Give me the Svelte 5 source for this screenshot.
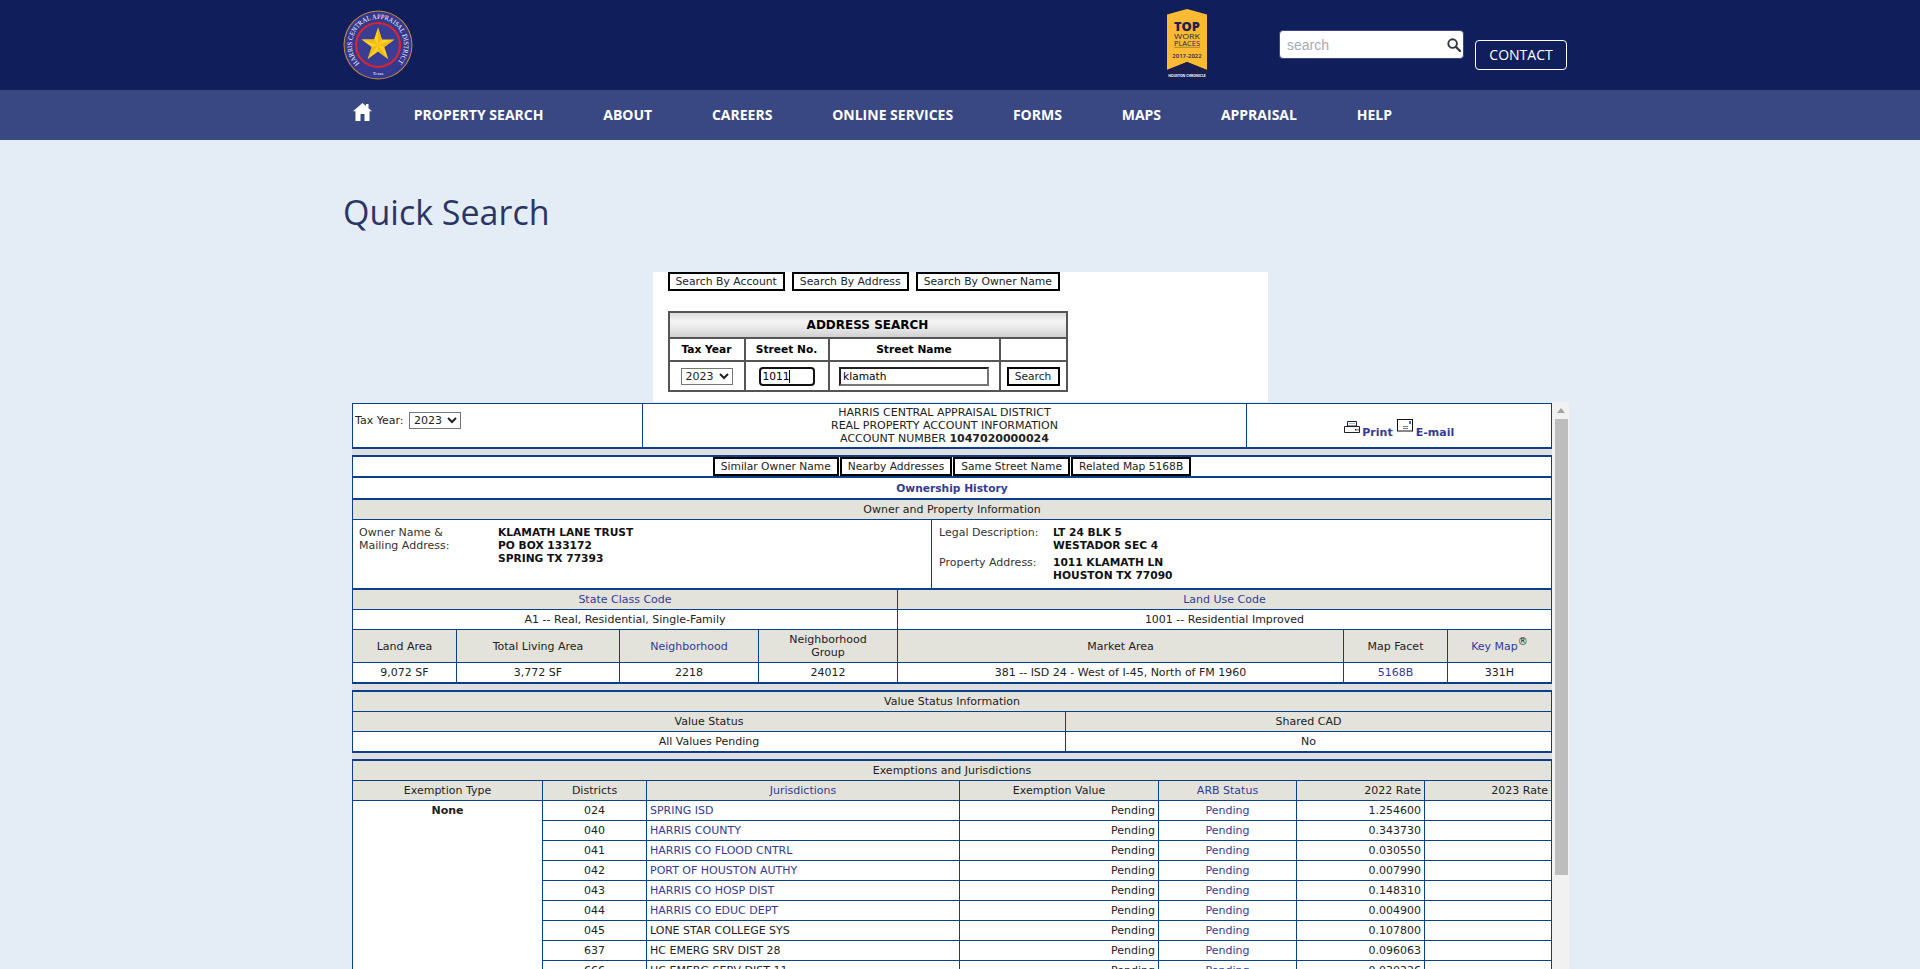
<script>
  const nav = ['Property Search', 'About', 'Careers', 'Online Services', 'Forms', 'Maps', 'Appraisal', 'Help'];
  const relatedLinks = ['Similar Owner Name', 'Nearby Addresses', 'Same Street Name', 'Related Map 5168B'];
  const searchTabs = ['Search By Account', 'Search By Address', 'Search By Owner Name'];

  const districts = [
    { id: '024', name: 'SPRING ISD', link: true, rate: '1.254600' },
    { id: '040', name: 'HARRIS COUNTY', link: true, rate: '0.343730' },
    { id: '041', name: 'HARRIS CO FLOOD CNTRL', link: true, rate: '0.030550' },
    { id: '042', name: 'PORT OF HOUSTON AUTHY', link: true, rate: '0.007990' },
    { id: '043', name: 'HARRIS CO HOSP DIST', link: true, rate: '0.148310' },
    { id: '044', name: 'HARRIS CO EDUC DEPT', link: true, rate: '0.004900' },
    { id: '045', name: 'LONE STAR COLLEGE SYS', link: false, rate: '0.107800' },
    { id: '637', name: 'HC EMERG SRV DIST 28', link: false, rate: '0.096063' },
    { id: '666', name: 'HC EMERG SERV DIST 11', link: false, rate: '0.030226' }
  ];
</script>

<div class="page">
  <header class="top">
    <div class="wrap top-row">
      <svg class="logo" viewBox="0 0 70 70" role="img" aria-label="Harris Central Appraisal District">
        <defs>
          <path id="ring" d="M16.600 53.400 A26 26 0 1 1 53.400 53.400" />
        </defs>
        <circle cx="35" cy="35" r="34.500" fill="#c98a3c" />
        <circle cx="35" cy="35" r="33.500" fill="#34388f" />
        <circle cx="35" cy="35" r="22" fill="#3a3d94" stroke="#d8262f" stroke-width="2.200" />
        <text class="ring-text"><textPath href="#ring" textLength="120" lengthAdjust="spacingAndGlyphs">HARRIS CENTRAL APPRAISAL DISTRICT</textPath></text>
        <text class="ring-state" x="35" y="65" text-anchor="middle">Texas</text>
        <polygon fill="#ffd21f" points="35,17.500 38.900,29.500 51.500,29.500 41.300,36.900 45.200,48.900 35,41.500 24.800,48.900 28.700,36.900 18.500,29.500 31.100,29.500" />
        <polygon fill="#f2b91c" points="35,17.500 38.900,29.500 35,35" />
        <polygon fill="#f2b91c" points="51.500,29.500 41.300,36.900 35,35" />
        <polygon fill="#f2b91c" points="45.200,48.900 35,41.500 35,35" />
        <polygon fill="#f2b91c" points="24.800,48.900 28.700,36.900 35,35" />
        <polygon fill="#f2b91c" points="18.500,29.500 31.100,29.500 35,35" />
      </svg>

      <svg class="badge" viewBox="0 0 40 71" role="img" aria-label="Top Workplaces 2017-2022">
        <polygon fill="#fbb934" points="0,5.500 20,0 40,5.500 40,61 20,53 0,61" />
        <polygon fill="#1a1d4e" points="0,61 20,53 40,61 40,71 0,71" />
        <text class="b-top" x="7" y="22" textLength="26" lengthAdjust="spacingAndGlyphs">TOP</text>
        <text class="b-mid" x="7" y="29.500" textLength="26" lengthAdjust="spacingAndGlyphs">WORK</text>
        <text class="b-mid" x="7" y="36.500" textLength="26" lengthAdjust="spacingAndGlyphs">PLACES</text>
        <rect x="7" y="37.800" width="26" height="0.800" fill="#8a7a45" />
        <text class="b-years" x="20" y="49" text-anchor="middle">2017-2022</text>
        <text class="b-foot" x="20" y="68" text-anchor="middle">HOUSTON CHRONICLE</text>
      </svg>

      <div class="site-search">
        <input type="text" placeholder="search" />
        <svg viewBox="0 0 14 14" aria-hidden="true">
          <circle cx="5.600" cy="5.600" r="4.300" fill="none" stroke="#33363f" stroke-width="1.900" />
          <path d="M8.800 8.800 L13 13" stroke="#33363f" stroke-width="2.200" stroke-linecap="round" />
        </svg>
      </div>
      <button class="contact">CONTACT</button>
    </div>
  </header>

  <nav class="menu">
    <div class="wrap menu-row">
      <svg class="home" viewBox="0 0 19 18" aria-label="Home">
        <path fill="#fff" d="M9.500 0 L13 3 V1 H15.500 V5.200 L19 8.300 H16.500 V18 H11.500 V11 H7.500 V18 H2.500 V8.300 H0 Z" />
      </svg>
      {#each nav as item}
        <span class="menu-item">{item}</span>
      {/each}
    </div>
  </nav>

  <main class="wrap content">
    <h1>Quick Search</h1>

    <section class="search-panel">
      <div class="tabs">
        {#each searchTabs as tab}
          <button class="tab panel-tab">{tab}</button>
        {/each}
      </div>
      <table class="address">
        <colgroup>
          <col class="a1" /><col class="a2" /><col class="a3" /><col />
        </colgroup>
        <thead>
          <tr><th colspan="4" class="address-title">ADDRESS SEARCH</th></tr>
          <tr><th>Tax Year</th><th>Street No.</th><th>Street Name</th><th></th></tr>
        </thead>
        <tbody>
          <tr>
            <td><select class="year"><option>2023</option></select></td>
            <td>
              <span class="caret-box">
                <input class="street-no" value="1011" />
                <i class="caret"></i>
              </span>
            </td>
            <td><input class="street-name" value="klamath" /></td>
            <td><button class="go">Search</button></td>
          </tr>
        </tbody>
      </table>
    </section>

    <div class="frame">
      <div class="report">
        <table class="grid head-table">
          <colgroup><col class="h1" /><col class="h2" /><col /></colgroup>
          <tbody>
            <tr>
              <td class="left tax-cell">Tax Year: <select class="year tax-year"><option>2023</option></select></td>
              <td class="head-mid">
                HARRIS CENTRAL APPRAISAL DISTRICT<br />
                REAL PROPERTY ACCOUNT INFORMATION<br />
                ACCOUNT NUMBER <b>1047020000024</b>
              </td>
              <td class="tools">
                <svg class="print-ico" viewBox="0 0 16 12" aria-hidden="true">
                  <path d="M3.500 .5 H12.500 V5 H3.500 Z" fill="#fff" stroke="#222" />
                  <rect x="5" y="2" width="6" height="1" fill="#8fd0f0" />
                  <path d="M.5 5.500 H15.500 V11.500 H.5 Z" fill="#fff" stroke="#222" />
                  <rect x="11" y="8" width="1.500" height="1.500" fill="#222" />
                  <rect x="13.500" y="8" width="1" height="1.500" fill="#222" />
                </svg>
                <a href="#print">Print</a>
                <svg class="mail-ico" viewBox="0 0 16 13" aria-hidden="true">
                  <rect x=".5" y=".5" width="15" height="11.500" fill="#fff" stroke="#111" />
                  <rect x="12" y="2" width="2" height="3" fill="#5566a8" />
                  <path d="M6 7 h5 v1 h-5 z M6 9 h5 v1 h-5 z" fill="#777" />
                </svg>
                <a href="#mail">E-mail</a>
              </td>
            </tr>
          </tbody>
        </table>

        <div class="gap"></div>

        <div class="band related">
          {#each relatedLinks as link}
            <button class="tab">{link}</button>
          {/each}
        </div>
        <div class="band history"><a href="#history">Ownership History</a></div>
        <div class="band beige-band">Owner and Property Information</div>

        <div class="owner">
          <div class="owner-left">
            <span>Owner Name &amp;<br />Mailing Address:</span>
            <b>KLAMATH LANE TRUST<br />PO BOX 133172<br />SPRING TX 77393</b>
          </div>
          <div class="owner-right">
            <span>Legal Description:</span>
            <b>LT 24 BLK 5<br />WESTADOR SEC 4</b>
            <span>Property Address:</span>
            <b>1011 KLAMATH LN<br />HOUSTON TX 77090</b>
          </div>
        </div>

        <table class="grid">
          <colgroup><col class="s1" /><col /></colgroup>
          <tbody>
            <tr class="beige">
              <td><a href="#state">State Class Code</a></td>
              <td><a href="#land">Land Use Code</a></td>
            </tr>
            <tr>
              <td>A1 -- Real, Residential, Single-Family</td>
              <td>1001 -- Residential Improved</td>
            </tr>
          </tbody>
        </table>

        <table class="grid closed">
          <colgroup>
            <col class="l1" /><col class="l2" /><col class="l3" /><col class="l4" />
            <col class="l5" /><col class="l6" /><col />
          </colgroup>
          <tbody>
            <tr class="beige tall">
              <td>Land Area</td>
              <td>Total Living Area</td>
              <td><a href="#hood">Neighborhood</a></td>
              <td>Neighborhood<br />Group</td>
              <td>Market Area</td>
              <td>Map Facet</td>
              <td><a href="#key">Key Map</a><sup>®</sup></td>
            </tr>
            <tr>
              <td>9,072 SF</td>
              <td>3,772 SF</td>
              <td>2218</td>
              <td>24012</td>
              <td>381 -- ISD 24 - West of I-45, North of FM 1960</td>
              <td><a href="#facet">5168B</a></td>
              <td>331H</td>
            </tr>
          </tbody>
        </table>

        <div class="gap"></div>

        <div class="band open-band beige-band">Value Status Information</div>
        <table class="grid closed">
          <colgroup><col class="v1" /><col /></colgroup>
          <tbody>
            <tr class="beige"><td>Value Status</td><td>Shared CAD</td></tr>
            <tr><td>All Values Pending</td><td>No</td></tr>
          </tbody>
        </table>

        <div class="gap"></div>

        <div class="band open-band beige-band">Exemptions and Jurisdictions</div>
        <table class="grid">
          <colgroup>
            <col class="e1" /><col class="e2" /><col class="e3" /><col class="e4" />
            <col class="e5" /><col class="e6" /><col />
          </colgroup>
          <tbody>
            <tr class="beige">
              <td>Exemption Type</td>
              <td>Districts</td>
              <td><a href="#jur">Jurisdictions</a></td>
              <td>Exemption Value</td>
              <td><a href="#arb">ARB Status</a></td>
              <td class="right">2022 Rate</td>
              <td class="right">2023 Rate</td>
            </tr>
            {#each districts as d, i}
              <tr>
                {#if i === 0}
                  <td class="none" rowspan={districts.length}><b>None</b></td>
                {/if}
                <td>{d.id}</td>
                <td class="left">
                  {#if d.link}<a href="#d">{d.name}</a>{:else}{d.name}{/if}
                </td>
                <td class="right">Pending</td>
                <td><a href="#p">Pending</a></td>
                <td class="right">{d.rate}</td>
                <td></td>
              </tr>
            {/each}
          </tbody>
        </table>
      </div>

      <div class="scrollbar">
        <div class="arrow"></div>
        <div class="thumb"></div>
      </div>
    </div>
  </main>
</div>

<style>
  :global(body) {
    background: #e4ecf6;
    overflow: hidden;
  }
  .page {
    height: 100vh;
    display: flex;
    flex-direction: column;
    overflow: hidden;
  }
  .wrap {
    width: 1234px;
    margin: 0 auto;
    box-sizing: border-box;
  }
  .top {
    background: #101f5c;
    height: 90px;
    flex: none;
  }
  .top-row {
    display: flex;
    align-items: flex-start;
    height: 90px;
    padding-right: 10px;
  }
  .logo {
    width: 70px;
    height: 70px;
    margin-top: 10px;
  }
  .ring-text {
    font: 7px "Liberation Serif", serif;
    fill: #fff;
  }
  .ring-state {
    font: 4.500px "Liberation Serif", serif;
    fill: #fff;
  }
  .badge {
    width: 40px;
    height: 71px;
    margin: 9px 0 0 754px;
  }
  .b-top {
    font: 800 12px "Open Sans", sans-serif;
    fill: #1c2350;
  }
  .b-mid {
    font: 7px "Open Sans", sans-serif;
    fill: #1c2350;
  }
  .b-years {
    font: 600 6px "Open Sans", sans-serif;
    fill: #1c2350;
  }
  .b-foot {
    font: 700 3.400px "Open Sans", sans-serif;
    fill: #fff;
  }
  .site-search {
    width: 185px;
    height: 29px;
    margin: 30px 0 0 72px;
    box-sizing: border-box;
    background: #fff;
    border: 1px solid #394882;
    border-radius: 4px;
    display: flex;
    align-items: center;
    padding: 0 2px 0 7px;
  }
  .site-search input {
    flex: 1;
    min-width: 0;
    border: 0;
    outline: 0;
    padding: 0;
    background: none;
    font: 14px "Liberation Sans", sans-serif;
  }
  .site-search input::placeholder {
    color: #a4abb9;
    opacity: 1;
  }
  .site-search svg {
    width: 14px;
    height: 14px;
  }
  .contact {
    width: 92px;
    height: 30px;
    margin: 40px 0 0 11px;
    border: 1px solid #fff;
    border-radius: 4px;
    background: none;
    color: #fff;
    padding: 0 0 2px;
    font: 14px "Open Sans", sans-serif;
  }
  .menu {
    background: #394882;
    height: 50px;
    flex: none;
  }
  .menu-row {
    display: flex;
    align-items: center;
    height: 50px;
    padding: 0 0 2px 10px;
    gap: 59.800px;
  }
  .home {
    width: 19px;
    height: 18px;
    margin: -4px -18px 0 0;
    flex: none;
  }
  .menu-item {
    font: 700 14px "Open Sans", sans-serif;
    color: #fff;
    text-transform: uppercase;
    white-space: nowrap;
  }
  .content {
    flex: 1;
    min-height: 0;
    display: flex;
    flex-direction: column;
  }
  h1 {
    margin: 0;
    padding-top: 48px;
    height: 84px;
    font: 400 34px/49px "Open Sans", sans-serif;
    color: #2a3566;
    flex: none;
  }
  .search-panel {
    width: 615px;
    height: 130px;
    margin: 0 auto;
    flex: none;
    box-sizing: border-box;
    background: #fff;
    padding-left: 15px;
    font: 11px "DejaVu Sans", sans-serif;
    color: #000;
  }
  .tabs {
    display: flex;
    gap: 7px;
    margin-bottom: 20px;
  }
  .tab {
    font: 10.670px/13px "DejaVu Sans", sans-serif;
    color: #222;
    background: #fff;
    border: 2px solid #000;
    height: 19px;
    padding: 0 6px;
    white-space: nowrap;
    border-radius: 0;
  }
  .panel-tab {
    font-size: 10.800px;
  }
  .address {
    width: 400px;
    table-layout: fixed;
    border-collapse: collapse;
    text-align: center;
  }
  .address th, .address td {
    border: 2px solid #555;
    padding: 0;
  }
  .address th {
    height: 21px;
    font-weight: 700;
    font-size: 10.670px;
  }
  .address .address-title {
    height: 24px;
    background: linear-gradient(#dcdcdc, #f4f4f4 35%, #e4e4e4 70%, #d0d0d0);
    font-size: 12px;
  }
  .address td {
    height: 28px;
  }
  .a1 { width: 76px; }
  .a2 { width: 84px; }
  .a3 { width: 171px; }
  .year {
    height: 17px;
    width: 52px;
    padding: 0;
    font: 11px "DejaVu Sans", sans-serif;
    color: #222;
    background: #fff;
    border: 1px solid #767676;
    border-radius: 0;
  }
  .tax-year {
    margin-left: 2px;
  }
  .caret-box {
    position: relative;
    display: inline-block;
    vertical-align: middle;
  }
  .street-no {
    width: 56px;
    height: 19px;
    box-sizing: border-box;
    border: 2px solid #111;
    border-radius: 4px;
    padding: 0 2px;
    font: 10.670px "DejaVu Sans", sans-serif;
    display: block;
  }
  .caret {
    position: absolute;
    left: 30px;
    top: 3px;
    width: 1px;
    height: 13px;
    background: #000;
  }
  .street-name {
    width: 150px;
    height: 19px;
    box-sizing: border-box;
    border: 2px inset #767676;
    padding: 0 2px;
    font: 10.670px "DejaVu Sans", sans-serif;
    vertical-align: middle;
  }
  .go {
    width: 53px;
    height: 19px;
    box-sizing: border-box;
    background: #fff;
    border: 2px solid #000;
    padding: 0;
    color: #222;
    font: 10.670px "DejaVu Sans", sans-serif;
    vertical-align: middle;
  }
  .frame {
    flex: 1;
    min-height: 0;
    margin-left: 9px;
    width: 1217px;
    display: flex;
    overflow: hidden;
  }
  .report {
    width: 1200px;
    flex: none;
    padding-top: 1px;
    font: 11px/13px "DejaVu Sans", sans-serif;
    color: #222;
  }
  .report a {
    color: #333b94;
    text-decoration: none;
  }
  .grid {
    width: 1200px;
    table-layout: fixed;
    border-collapse: separate;
    border-spacing: 0;
    border-left: 1px solid #0b3f8c;
    border-right: 1px solid #0b3f8c;
    background: #fff;
    text-align: center;
    box-sizing: border-box;
  }
  .grid td {
    padding: 3px;
    border-right: 1px solid #0b3f8c;
    border-bottom: 1px solid #0b3f8c;
    box-sizing: border-box;
    height: 20px;
  }
  .grid td:last-child {
    border-right: 0;
  }
  .grid.closed tr:last-child td {
    border-bottom: 2px solid #0b3f8c;
    height: 21px;
  }
  .grid .beige td {
    background: #e3e3db;
  }
  .grid .tall td {
    height: 33px;
  }
  .grid .left {
    text-align: left;
  }
  .grid .right {
    text-align: right;
  }
  .grid sup {
    font-size: 10px;
    line-height: 0;
  }
  .head-table {
    border-top: 1px solid #0b3f8c;
    border-bottom: 2px solid #0b3f8c;
  }
  .head-table td {
    height: 43px;
    padding: 2px;
    border-bottom: 0;
  }
  .head-table .tax-cell {
    padding-bottom: 12px;
  }
  .head-table .tools {
    padding-top: 8px;
  }
  .tools a {
    font-weight: 700;
  }
  .print-ico {
    width: 16px;
    height: 12px;
    vertical-align: 3px;
    margin-right: -1px;
  }
  .mail-ico {
    width: 16px;
    height: 13px;
    vertical-align: 4px;
    margin: 0 -1px 0 1px;
  }
  .h1 { width: 290px; }
  .h2 { width: 604px; }
  .s1 { width: 545px; }
  .l1 { width: 104px; }
  .l2 { width: 163px; }
  .l3 { width: 139px; }
  .l4 { width: 139px; }
  .l5 { width: 446px; }
  .l6 { width: 104px; }
  .v1 { width: 713px; }
  .e1 { width: 190px; }
  .e2 { width: 104px; }
  .e3 { width: 313px; }
  .e4 { width: 199px; }
  .e5 { width: 138px; }
  .e6 { width: 128px; }
  .none {
    vertical-align: top;
  }
  .gap {
    height: 6px;
    background: #dfdfdf;
  }
  .band {
    box-sizing: border-box;
    width: 1200px;
    background: #fff;
    border-left: 1px solid #0b3f8c;
    border-right: 1px solid #0b3f8c;
    border-bottom: 2px solid #0b3f8c;
    text-align: center;
  }
  .related {
    border-top: 2px solid #0b3f8c;
    height: 23px;
    display: flex;
    justify-content: center;
    gap: 1px;
  }
  .history {
    height: 22px;
    line-height: 22px;
  }
  .history a {
    font-weight: 700;
    font-size: 10.670px;
  }
  .beige-band {
    background: #e3e3db;
    height: 20px;
    line-height: 19px;
    border-bottom-width: 1px;
  }
  .open-band {
    border-top: 2px solid #0b3f8c;
    height: 22px;
  }
  .owner {
    display: flex;
    box-sizing: border-box;
    height: 70px;
    background: #fff;
    border-left: 1px solid #0b3f8c;
    border-right: 1px solid #0b3f8c;
    border-bottom: 2px solid #0b3f8c;
    color: #333;
  }
  .owner b {
    color: #111;
    font-size: 10.670px;
  }
  .owner-left {
    width: 579px;
    box-sizing: border-box;
    border-right: 1px solid #0b3f8c;
    display: grid;
    grid-template-columns: 139px 1fr;
    align-content: start;
    padding: 6px 0 0 6px;
  }
  .owner-right {
    flex: 1;
    display: grid;
    grid-template-columns: 114px 1fr;
    align-content: start;
    row-gap: 4px;
    padding: 6px 0 0 7px;
  }
  .scrollbar {
    width: 17px;
    background: #f1f1f1;
    padding-left: 3px;
    box-sizing: border-box;
    flex: none;
  }
  .arrow {
    height: 17px;
    display: flex;
    align-items: center;
    justify-content: center;
    margin-left: -2px;
  }
  .arrow::before {
    content: "";
    border-left: 4px solid transparent;
    border-right: 4px solid transparent;
    border-bottom: 5px solid #a3a3a3;
  }
  .thumb {
    height: 456px;
    width: 13px;
    background: #bdbdbd;
  }
</style>
